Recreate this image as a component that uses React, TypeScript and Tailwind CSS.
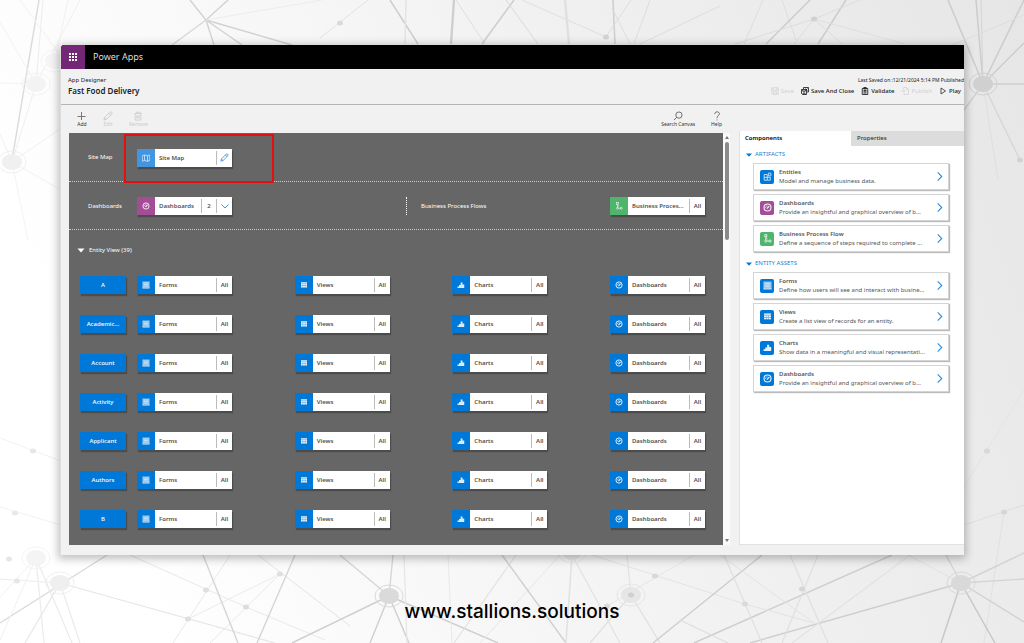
import React from "react";

type IconName = "map" | "gauge" | "flow" | "form" | "grid" | "chart" | "entity";

const Glyph: React.FC<{ name: IconName; className?: string }> = ({ name, className }) => (
  <svg viewBox="0 0 16 16" className={className} fill="none" stroke="currentColor" strokeWidth="1.4" aria-hidden="true">
    {name === "map" && <path d="M0.500 3.500 5 2l6 1.500L15.500 2v11L11 14.500 5 13l-4.500 1.500zM5 2v11M11 3.500v11" />}
    {name === "gauge" && (
      <>
        <circle cx="8" cy="8" r="6.200" strokeWidth="2" />
        <path d="M7 10 11 5.500" strokeWidth="2.400" />
        <path d="M4.500 9C4.300 6.500 6 5 8 5" strokeWidth="1.200" />
      </>
    )}
    {name === "flow" && (
      <>
        <path d="M5 5v6M5 6.500 8 9M7 12.500h4" />
        <rect x="3.200" y="1.200" width="3.600" height="3.600" />
        <circle cx="5" cy="12.500" r="2" />
        <circle cx="12.500" cy="12.500" r="2" />
      </>
    )}
    {name === "form" && (
      <>
        <rect x="2" y="1" width="12" height="12" fill="currentColor" fillOpacity="0.65" stroke="none" />
        <path d="M4 4h8M4 7h8M4 10h8" strokeWidth="1" />
        <path d="M1 14h14" strokeWidth="2" />
        <path d="M1.500 1v13M14.500 1v13" strokeWidth="1" />
      </>
    )}
    {name === "grid" && (
      <>
        <rect x="2" y="3" width="12" height="10" fill="currentColor" fillOpacity="0.4" stroke="none" />
        <path
          d="M2 2.500h12v2.500H2zM2 6h3.300v3H2zM6.300 6h3.400v3H6.300zM10.700 6H14v3h-3.300zM2 10h3.300v3H2zM6.300 10h3.400v3H6.300zM10.700 10H14v3h-3.300z"
          fill="currentColor"
          stroke="none"
        />
      </>
    )}
    {name === "chart" && (
      <path d="M1 14v-3h3V8h3.300V3h3.700v4h3.500v7z" fill="currentColor" stroke="none" />
    )}
    {name === "entity" && (
      <path d="M2 4.500h5.500v10H2zM7.500 9.500H13v5H7.500M2 9.500h5.500M9.500 2H14v5H9.500z" />
    )}
  </svg>
);

const Chevron: React.FC<{ className?: string }> = ({ className }) => (
  <svg viewBox="0 0 10 10" className={className} fill="none" stroke="currentColor" strokeWidth="1.2" aria-hidden="true">
    <path d="M3 0.500 7.500 5 3 9.500" />
  </svg>
);

const Pencil: React.FC<{ className?: string }> = ({ className }) => (
  <svg viewBox="0 0 16 16" className={className} fill="none" stroke="currentColor" strokeWidth="1.5" aria-hidden="true">
    <path d="M1.500 14.500 2.500 10.500 11 2c.8-.8 2-.8 2.700 0 .8.8.8 2 0 2.800L5.500 13.500zM9.500 3.500l3 3M2.500 10.500l3 3" />
  </svg>
);

const lines: [number, number, number, number, string, number][] = [
  [206, 20, 190, 0, "#d2d2d2", 1.4],
  [206, 20, 228, 0, "#d2d2d2", 1.4],
  [206, 20, 172, 45, "#d6d6d6", 1.2],
  [206, 20, 214, 45, "#d2d2d2", 1.4],
  [206, 20, 242, 45, "#d2d2d2", 1.4],
  [206, 20, 292, 45, "#d2d2d2", 1.4],
  [206, 20, 322, 0, "#ececec", 1],
  [39, 0, 12, 160, "#dcdcdc", 1.5],
  [43, 0, 36, 84, "#ececec", 1],
  [80, 0, 36, 84, "#f0f0f0", 1],
  [0, 22, 36, 84, "#f2f2f2", 1],
  [20, 0, 62, 58, "#f2f2f2", 1],
  [68, 0, 56, 56, "#f0f0f0", 1],
  [36, 84, 12, 162, "#efefef", 1],
  [36, 84, 0, 83, "#f2f2f2", 1],
  [12, 162, 61, 128, "#f0f0f0", 1],
  [12, 162, 61, 190, "#f2f2f2", 1],
  [12, 162, 0, 134, "#f2f2f2", 1],
  [12, 162, 28, 240, "#f4f4f4", 1],
  [320, 38, 368, 0, "#e2e2e2", 1],
  [390, 0, 418, 44, "#cccccc", 1.4],
  [406, 0, 405, 44, "#e2e2e2", 1.4],
  [454, 0, 451, 44, "#cfcfcf", 2.4],
  [456, 0, 485, 44, "#dfdfdf", 1],
  [514, 0, 482, 44, "#cccccc", 1.4],
  [506, 0, 538, 44, "#e0e0e0", 1.2],
  [522, 0, 606, 37, "#dfdfdf", 1],
  [565, 0, 569, 44, "#e0e0e0", 2.4],
  [613, 0, 615, 44, "#cfcfcf", 1.6],
  [606, 37, 631, 0, "#dddddd", 1],
  [612, 8, 630, 44, "#dddddd", 1],
  [650, 0, 634, 44, "#dddddd", 1],
  [640, 44, 720, 6, "#dddddd", 1],
  [763, 0, 744, 44, "#dddddd", 1],
  [782, 0, 796, 40, "#dddddd", 1],
  [810, 0, 766, 44, "#cbcbcb", 1.4],
  [846, 0, 818, 44, "#cbcbcb", 1.4],
  [814, 19, 735, 44, "#dddddd", 1],
  [814, 19, 794, 44, "#dddddd", 1],
  [814, 19, 842, 44, "#dddddd", 1],
  [814, 19, 905, 44, "#dfdfdf", 1],
  [814, 19, 860, 0, "#dddddd", 1],
  [983, 84, 948, 0, "#cccccc", 1.5],
  [983, 84, 976, 0, "#cccccc", 1.5],
  [983, 84, 981, 0, "#d4d4d4", 1],
  [983, 84, 1024, 0, "#cccccc", 1.5],
  [983, 84, 1024, 43, "#cccccc", 1.5],
  [983, 84, 1024, 84, "#cfcfcf", 1.5],
  [983, 84, 1020, 160, "#d4d4d4", 1.2],
  [983, 84, 964, 110, "#cfcfcf", 1.3],
  [940, 50, 1024, 15, "#dddddd", 1],
  [983, 84, 998, 180, "#dfdfdf", 1],
  [964, 487, 1024, 390, "#e4e4e4", 1],
  [964, 525, 1024, 505, "#e0e0e0", 1.2],
  [1004, 512, 984, 643, "#e2e2e2", 1.2],
  [0, 438, 61, 461, "#f2f2f2", 1],
  [0, 507, 61, 525, "#f2f2f2", 1],
  [107, 555, 0, 623, "#d9d9d9", 1.3],
  [0, 579, 60, 583, "#ececec", 1],
  [36, 558, 0, 597, "#f0f0f0", 1],
  [36, 558, 0, 640, "#f0f0f0", 1],
  [36, 558, 44, 643, "#ebebeb", 1.2],
  [36, 558, 72, 643, "#ebebeb", 1.2],
  [60, 583, 25, 643, "#e9e9e9", 1.4],
  [60, 583, 80, 643, "#e9e9e9", 1.2],
  [60, 583, 275, 643, "#e6e6e6", 1.2],
  [130, 555, 246, 607, "#e9e9e9", 1],
  [230, 555, 173, 643, "#e9e9e9", 1],
  [280, 574, 210, 643, "#e9e9e9", 1],
  [258, 555, 350, 626, "#e4e4e4", 1],
  [246, 607, 325, 640, "#e9e9e9", 1],
  [280, 574, 188, 619, "#ebebeb", 1],
  [203, 555, 238, 643, "#d5d5d5", 1.4],
  [295, 555, 257, 643, "#d5d5d5", 1.4],
  [292, 643, 389, 596, "#cfcfcf", 1.4],
  [389, 596, 340, 555, "#d6d6d6", 1.4],
  [389, 596, 393, 555, "#d6d6d6", 1.4],
  [389, 596, 370, 643, "#cfcfcf", 1.4],
  [389, 596, 409, 643, "#cfcfcf", 1.4],
  [389, 596, 498, 643, "#cfcfcf", 1.4],
  [404, 555, 407, 643, "#e6e6e6", 1.2],
  [448, 555, 452, 643, "#e9e9e9", 1],
  [516, 555, 454, 643, "#e2e2e2", 1.2],
  [560, 555, 480, 643, "#e6e6e6", 1],
  [502, 555, 566, 643, "#d0d0d0", 1.4],
  [572, 555, 566, 643, "#e2e2e2", 1.6],
  [572, 555, 620, 643, "#e2e2e2", 1.2],
  [631, 595, 590, 643, "#e0e0e0", 1.2],
  [631, 595, 660, 643, "#e0e0e0", 1.2],
  [631, 595, 627, 555, "#e2e2e2", 1.2],
  [592, 555, 745, 604, "#e4e4e4", 1],
  [694, 555, 607, 606, "#e6e6e6", 1],
  [762, 555, 653, 643, "#cecece", 1.4],
  [892, 555, 694, 643, "#cecece", 1.4],
  [961, 583, 750, 643, "#cecece", 1.4],
  [724, 555, 762, 643, "#e0e0e0", 1.2],
  [790, 555, 828, 643, "#e0e0e0", 1.2],
  [818, 555, 782, 643, "#e0e0e0", 1.2],
  [745, 604, 814, 623, "#e2e2e2", 1],
  [720, 555, 814, 623, "#e2e2e2", 1],
  [910, 555, 792, 643, "#e2e2e2", 1.2],
  [680, 620, 728, 643, "#dedede", 1.2],
  [961, 583, 908, 555, "#e2e2e2", 1],
  [961, 583, 946, 555, "#d4d4d4", 1.4],
  [961, 583, 1024, 553, "#d4d4d4", 1.4],
  [961, 583, 1024, 579, "#d4d4d4", 1.4],
  [961, 583, 1024, 622, "#d0d0d0", 1.4],
  [961, 583, 995, 643, "#c8c8c8", 1.5],
  [961, 583, 941, 643, "#c8c8c8", 1.5],
];

const dots: [number, number, string][] = [
  [340, 23, "#dadada"],
  [606, 37, "#d3d3d3"],
  [814, 19, "#d0d0d0"],
  [1020, 160, "#d2d2d2"],
  [33, 451, "#e6e6e6"],
  [15, 513, "#e8e8e8"],
  [9, 559, "#e6e6e6"],
  [17, 581, "#e6e6e6"],
  [206, 590, "#dfdfdf"],
  [188, 619, "#dfdfdf"],
  [246, 607, "#dcdcdc"],
  [280, 574, "#dfdfdf"],
  [655, 576, "#d8d8d8"],
  [607, 606, "#dadada"],
  [631, 595, "#cfcfcf"],
  [802, 589, "#d6d6d6"],
  [745, 604, "#dadada"],
  [987, 451, "#d8d8d8"],
  [1004, 512, "#d6d6d6"],
];

const hubs: [number, number, string][] = [
  [36, 84, "#f3f3f3"],
  [12, 162, "#f0f0f0"],
  [55, 61, "#f5f5f5"],
  [36, 558, "#f4f4f4"],
  [60, 583, "#efefef"],
  [389, 596, "#dadada"],
  [631, 595, "#e6e6e6"],
  [572, 552, "#e8e8e8"],
  [961, 583, "#d9d9d9"],
  [983, 84, "#d0d0d0"],
];

const Backdrop = () => (
  <svg
    viewBox="0 0 1024 643"
    preserveAspectRatio="xMidYMid slice"
    className="absolute inset-0 w-full h-full"
    aria-hidden="true"
  >
    {lines.map(([x1, y1, x2, y2, color, width], i) => (
      <line key={i} x1={x1} y1={y1} x2={x2} y2={y2} stroke={color} strokeWidth={width} />
    ))}
    {hubs.map(([x, y, color]) => (
      <g key={`${x}-${y}`}>
        <ellipse cx={x} cy={y} rx="10" ry="8" fill={color} />
        <ellipse cx={x} cy={y} rx="14" ry="11" fill="none" stroke={color} />
      </g>
    ))}
    {dots.map(([x, y, color]) => (
      <ellipse key={`${x}-${y}`} cx={x} cy={y} rx="3" ry="2.500" fill={color} />
    ))}
  </svg>
);

interface TileProps {
  icon: IconName;
  label: string;
  color?: string;
  count?: string;
  end?: React.ReactNode;
}

const Tile: React.FC<TileProps> = ({ icon, label, color = "bg-[#0078d7]", count, end = "All" }) => (
  <button
    type="button"
    className="flex items-stretch w-[95px] h-[18px] shrink-0 bg-white text-left text-[6px] leading-[18px] font-semibold text-[#505050] shadow-[1px_2px_1px_#4c4c4c]"
  >
    <span className={`flex items-center justify-center w-[18px] text-white/85 ${color}`}>
      <Glyph name={icon} className="size-2" />
    </span>
    <span className="flex-1 min-w-0 pl-1 whitespace-nowrap">{label}</span>
    {count && <span className="w-[15px] my-[2px] border-l border-[#bbb] text-center leading-[14px]">{count}</span>}
    <span className="flex items-center justify-center w-4 my-[2px] border-l border-[#bbb]">{end}</span>
  </button>
);

const entities = ["A", "Academic...", "Account", "Activity", "Applicant", "Authors", "B"];

const columns: { icon: IconName; label: string }[] = [
  { icon: "form", label: "Forms" },
  { icon: "grid", label: "Views" },
  { icon: "chart", label: "Charts" },
  { icon: "gauge", label: "Dashboards" },
];

const Canvas = () => (
  <div className="flex">
    <div className="flex-1 bg-[#666] text-[6px] text-white">
      {/* Site map */}
      <div className="relative flex items-center h-[49px] pt-px pl-[19px] border-b border-dotted border-[#ccc]">
        <span className="w-[49px]">Site Map</span>
        <Tile icon="map" label="Site Map" color="bg-[#4296e0]" end={<Pencil className="size-[9px] text-[#3c93e0]" />} />
        <div className="absolute left-[55px] top-px w-[150px] h-[49px] border-2 border-[#e60f0f]" />
      </div>

      {/* Dashboards and flows */}
      <div className="grid grid-cols-[337fr_317fr] items-center h-12 pt-px border-b border-dotted border-[#ccc]">
        <div className="flex items-center pl-[19px]">
          <span className="w-[49px]">Dashboards</span>
          <Tile
            icon="gauge"
            label="Dashboards"
            color="bg-[#a34d97]"
            count="2"
            end={<Chevron className="size-2 rotate-90 text-[#3c93e0]" />}
          />
        </div>
        <div className="flex items-center justify-between pl-[14px] pr-[18px] border-l border-dotted border-white">
          <span>Business Process Flows</span>
          <Tile icon="flow" label="Business Proces..." color="bg-[#4fb56d]" />
        </div>
      </div>

      {/* Entity view */}
      <button type="button" className="flex items-center gap-1 h-10 pl-2">
        <svg viewBox="0 0 8 5" className="w-2 h-[5px]" fill="white" aria-hidden="true">
          <path d="M0.500 0.500h7L4 4.500z" />
        </svg>
        Entity View (39)
      </button>
      <div className="flex flex-col gap-[21px] pt-[6px] pb-[17px] pl-[11px] pr-[18px]">
        {entities.map((entity) => (
          <div key={entity} className="flex gap-[11px]">
            <button
              type="button"
              className="w-[46px] h-[18px] shrink-0 bg-[#0078d7] text-center leading-[18px] font-medium shadow-[1px_2px_1px_#4c4c4c]"
            >
              {entity}
            </button>
            <div className="flex flex-1 justify-between">
              {columns.map((column) => (
                <Tile key={column.label} icon={column.icon} label={column.label} />
              ))}
            </div>
          </div>
        ))}
      </div>
    </div>

    {/* Scroll bar */}
    <div className="flex flex-col items-center gap-[3px] w-[7px] py-[3px] bg-[#fafafa]">
      <svg viewBox="0 0 4 3" className="w-1 h-[3px]" fill="#777" aria-hidden="true">
        <path d="M0 3h4L2 0z" />
      </svg>
      <div className="w-1 h-[98px] rounded-full bg-[#8a8a8a]" />
      <svg viewBox="0 0 4 3" className="w-1 h-[3px] mt-auto" fill="#777" aria-hidden="true">
        <path d="M0 0h4L2 3z" />
      </svg>
    </div>
  </div>
);

interface CardProps {
  icon: IconName;
  title: string;
  text: string;
  color?: string;
}

const artifacts: CardProps[] = [
  { icon: "entity", title: "Entities", text: "Model and manage business data." },
  { icon: "gauge", title: "Dashboards", text: "Provide an insightful and graphical overview of b...", color: "bg-[#a34d97]" },
  { icon: "flow", title: "Business Process Flow", text: "Define a sequence of steps required to complete ...", color: "bg-[#4fb56d]" },
];

const assets: CardProps[] = [
  { icon: "form", title: "Forms", text: "Define how users will see and interact with busine..." },
  { icon: "grid", title: "Views", text: "Create a list view of records for an entity." },
  { icon: "chart", title: "Charts", text: "Show data in a meaningful and visual representati..." },
  { icon: "gauge", title: "Dashboards", text: "Provide an insightful and graphical overview of b..." },
];

const Card: React.FC<CardProps> = ({ icon, title, text, color = "bg-[#0078d7]" }) => (
  <button
    type="button"
    className="flex items-center w-full h-[27px] pl-[6px] pr-1 border border-[#d4d4d4] bg-white text-left shadow-[1px_1px_1px_#bbb]"
  >
    <span className={`flex items-center justify-center size-[14px] shrink-0 rounded-xs text-white/90 ${color}`}>
      <Glyph name={icon} className="size-[9px]" />
    </span>
    <span className="flex-1 min-w-0 pl-[5px] text-[6px] leading-[9px] text-[#555] whitespace-nowrap">
      <span className="block font-semibold">{title}</span>
      <span className="block">{text}</span>
    </span>
    <Chevron className="size-[9px] shrink-0 text-[#2b8ce0]" />
  </button>
);

const Section: React.FC<{ title: string; items: CardProps[] }> = ({ title, items }) => (
  <section>
    <h2 className="flex items-center gap-[3px] h-[17px] pl-[6px] text-[6px] text-[#1a7fd0]">
      <svg viewBox="0 0 6 4" className="w-[6px] h-1" fill="#0078d7" aria-hidden="true">
        <path d="M0 0.500h6L3 3.700z" />
      </svg>
      {title}
    </h2>
    <div className="flex flex-col gap-1 pl-[13px] pr-[15px]">
      {items.map((item) => (
        <Card key={item.title} {...item} />
      ))}
    </div>
  </section>
);

const App: React.FC = () => {
  return (
    <div className="relative min-h-screen bg-[linear-gradient(70deg,#ffffff_12%,#f1f1f1_60%,#e6e6e6)] font-['Noto_Sans',sans-serif]">
      <Backdrop />

      <div className="relative px-[60px] pt-[45px]">
        <main className="overflow-hidden rounded-tl-[4px] border-l border-[#ddd] bg-[#f1f1f1] shadow-[0_2px_8px_2px_rgba(0,0,0,0.25)]">
          {/* Top bar */}
          <header className="flex items-center h-6 bg-black text-[#ddd]">
            <button type="button" aria-label="App launcher" className="flex items-center justify-center w-6 h-6 bg-[#742774]">
              <svg viewBox="0 0 8 8" className="size-2" fill="white" aria-hidden="true">
                {[0, 3, 6].map((y) => [0, 3, 6].map((x) => <rect key={`${x}${y}`} x={x} y={y} width="2" height="2" />))}
              </svg>
            </button>
            <span className="pl-2 text-[9px]">Power Apps</span>
          </header>

          {/* App title and actions */}
          <div className="flex justify-between h-9 pl-[7px] pt-[6px] border-b border-[#b5b5b5] text-[#222]">
            <div>
              <p className="text-[6px] leading-[10px]">App Designer</p>
              <h1 className="text-[8px] leading-3 font-semibold">Fast Food Delivery</h1>
            </div>
            <div className="flex flex-col items-end">
              <p className="text-[5px] leading-[10px] whitespace-nowrap">Last Saved on :12/21/2024 5:14 PM Published</p>
              <div className="flex gap-[7px] pr-[3px] text-[6px] leading-3 font-medium">
                <button type="button" disabled className="flex items-center gap-[2px] font-normal text-[#d2d2d2]">
                  <svg viewBox="0 0 16 16" className="size-2" fill="none" stroke="currentColor" strokeWidth="1.6" aria-hidden="true">
                    <path d="M1.500 1.500h13v13h-11l-2-2zM4 2v5h8V2M5 14v-4h6v4" />
                  </svg>
                  Save
                </button>
                <button type="button" className="flex items-center gap-[2px]">
                  <svg viewBox="0 0 16 16" className="size-2" fill="none" stroke="currentColor" strokeWidth="1.700" aria-hidden="true">
                    <path d="M1 5h10v10H3l-2-2zM3.500 5.500v3h5v-3M4 15v-3h4v3M5 4V1h10v9h-3M9 3l4 4M13 3 9 7" />
                  </svg>
                  Save And Close
                </button>
                <button type="button" className="flex items-center gap-[2px]">
                  <svg viewBox="0 0 16 16" className="size-2" fill="none" stroke="currentColor" strokeWidth="1.800" aria-hidden="true">
                    <path d="M2.500 3h11v12h-11zM5.500 1h5v3h-5zM5 7h6M5 9.500h6M5 12h6" />
                  </svg>
                  Validate
                </button>
                <button type="button" disabled className="flex items-center gap-[2px] font-normal text-[#d2d2d2]">
                  <svg viewBox="0 0 16 16" className="size-2" fill="none" stroke="currentColor" strokeWidth="1.500" aria-hidden="true">
                    <path d="M5 5V1h6l4 4v10H6v-3M11 1v4h4M0 8h7M5 5.500 7.500 8 5 10.500" />
                  </svg>
                  Publish
                </button>
                <button type="button" className="flex items-center gap-[2px]">
                  <svg viewBox="0 0 16 16" className="size-2" fill="none" stroke="currentColor" strokeWidth="1.500" aria-hidden="true">
                    <path d="M4 2v12l9-6z" />
                  </svg>
                  Play
                </button>
              </div>
            </div>
          </div>

          <div className="flex gap-[9px] pl-2 pb-[10px]">
            <div className="flex-1">
              {/* Command bar */}
              <div className="flex items-center h-7 px-2 text-[5px] leading-[7px] text-[#333]">
                <button type="button" className="flex flex-col items-center">
                  <svg viewBox="0 0 10 10" className="size-[10px]" fill="none" stroke="#777" aria-hidden="true">
                    <path d="M4.500 1v8M0.500 5.500h8" />
                  </svg>
                  Add
                </button>
                <button type="button" disabled className="flex flex-col items-center ml-4 text-[#ccc]">
                  <Pencil className="size-[10px]" />
                  Edit
                </button>
                <button type="button" disabled className="flex flex-col items-center ml-4 text-[#ccc]">
                  <svg viewBox="0 0 16 16" className="size-[10px]" fill="none" stroke="currentColor" strokeWidth="1.300" aria-hidden="true">
                    <path d="M2 4h12M5.500 4V2h5v2M3.500 4v10.500h9V4M6 7v5M8 7v5M10 7v5" />
                  </svg>
                  Remove
                </button>
                <button type="button" className="flex flex-col items-center ml-auto">
                  <svg viewBox="0 0 16 16" className="size-[10px]" fill="none" stroke="#555" strokeWidth="1.300" aria-hidden="true">
                    <circle cx="9.500" cy="6.500" r="5" />
                    <path d="M6 10 1.500 14.500" />
                  </svg>
                  Search Canvas
                </button>
                <button type="button" className="flex flex-col items-center ml-4">
                  <svg viewBox="0 0 16 16" className="size-[10px]" fill="none" stroke="#555" strokeWidth="1.300" aria-hidden="true">
                    <path d="M4.500 5C4.500 2.500 6 1.300 8 1.300s3.800 1.200 3.800 3.200C11.800 7.500 8 7.500 8 11.500M8 13.500V15" />
                  </svg>
                  Help
                </button>
              </div>
              <Canvas />
            </div>

            {/* Components panel */}
            <aside className="w-[225px] mt-[26px] border-l border-b border-[#e2e2e2] bg-white">
              <div className="grid grid-cols-[111fr_113fr] h-[15px] text-[6px] leading-[15px] font-semibold">
                <button type="button" className="pl-[5px] text-left text-black">Components</button>
                <button type="button" className="pl-[6px] bg-[#dcdcdc] text-left font-medium text-[#333]">Properties</button>
              </div>
              <Section title="ARTIFACTS" items={artifacts} />
              <div className="pt-[3px]">
                <Section title="ENTITY ASSETS" items={assets} />
              </div>
            </aside>
          </div>
        </main>

        <footer className="pt-[45px] pb-[15px] text-center font-['Inter',sans-serif] text-[19px] leading-6 font-medium text-black">
          <a href="#">www.stallions.solutions</a>
        </footer>
      </div>
    </div>
  );
};

export default App;
